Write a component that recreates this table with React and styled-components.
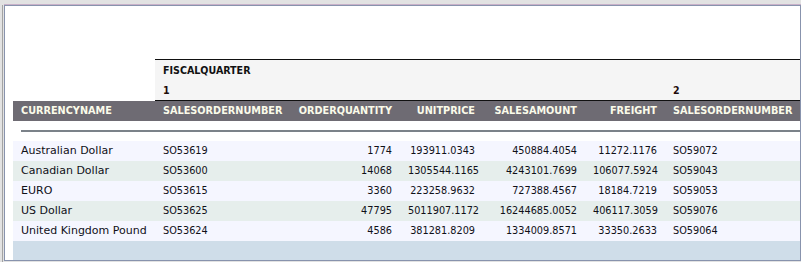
import React from "react";
import styled, { createGlobalStyle } from "styled-components";

const Global = createGlobalStyle`
  html, body { margin: 0; padding: 0; background: #e2e2e2; }
  body { font-family: "DejaVu Sans Condensed", "DejaVu Sans", sans-serif; font-size: 10.6px; }
`;

const COLS = "142px 134px 111px 83px 102px 80px 1fr";

const Shell = styled.div`
  width: 801px;
  height: 262px;
  box-sizing: border-box;
  padding: 5px 0 0 2px;
  background: #e2e2e2;
  overflow: hidden;
`;

const Bezel = styled.div`
  border-left: 1px solid #a3a3a3;
  padding-left: 1px;
  height: 100%;
  box-sizing: border-box;
`;

const Panel = styled.div`
  box-sizing: border-box;
  height: 256px;
  border: 1px solid #8893ad;
  box-shadow: 0 -1px 0 #c9b1c9;
  background: #ffffff;
  overflow: hidden;
  padding-left: 8px;
`;

const TopSpace = styled.div`
  height: 53px;
`;

const FiscalRow = styled.div`
  display: grid;
  grid-template-columns: 142px 1fr;
`;

const FiscalBox = styled.div`
  grid-column: 2;
  background: #f5f5f5;
  border-top: 1px solid #111;
  border-bottom: 1px solid #111;
`;

const QuarterGrid = styled.div`
  display: grid;
  grid-template-columns: 510px 1fr;
`;

const FiscalCell = styled.div`
  height: 20px;
  line-height: 20px;
  padding-left: 8px;
  font-weight: bold;
  color: ${(p) => (p.$dark ? "#1e0c0c" : "#111")};
  white-space: nowrap;
`;

const GridRow = styled.div`
  display: grid;
  grid-template-columns: ${COLS};
  height: 20px;
  background: ${(p) => p.$bg};
`;

const Cell = styled.div`
  line-height: 20px;
  padding: 0 8px;
  white-space: nowrap;
  overflow: hidden;
  text-align: ${(p) => (p.$right ? "right" : "left")};
  color: ${(p) => (p.$head ? "#fbfbea" : "#101018")};
  font-weight: ${(p) => (p.$head ? "bold" : "normal")};
  font-family: ${(p) =>
    p.$wide ? '"DejaVu Sans", sans-serif' : '"DejaVu Sans Condensed", "DejaVu Sans", sans-serif'};
  font-size: ${(p) => (p.$wide ? "11px" : "10.8px")};
`;

const Gap = styled.div`
  height: 9px;
`;

const Rule = styled.div`
  height: 2px;
  margin-left: 8px;
  background: #7b8289;
`;

const Filler = styled.div`
  height: 20px;
  background: #cfdde9;
`;

const headers = [
  ["CURRENCYNAME", false],
  ["SALESORDERNUMBER", false],
  ["ORDERQUANTITY", true],
  ["UNITPRICE", true],
  ["SALESAMOUNT", true],
  ["FREIGHT", true],
  ["SALESORDERNUMBER", false],
];

const rows = [
  ["Australian Dollar", "SO53619", "1774", "193911.0343", "450884.4054", "11272.1176", "SO59072"],
  ["Canadian Dollar", "SO53600", "14068", "1305544.1165", "4243101.7699", "106077.5924", "SO59043"],
  ["EURO", "SO53615", "3360", "223258.9632", "727388.4567", "18184.7219", "SO59053"],
  ["US Dollar", "SO53625", "47795", "5011907.1172", "16244685.0052", "406117.3059", "SO59076"],
  ["United Kingdom Pound", "SO53624", "4586", "381281.8209", "1334009.8571", "33350.2633", "SO59064"],
];

export default function App() {
  return (
    <>
      <Global />
      <Shell>
        <Bezel>
          <Panel>
            <TopSpace />
            <FiscalRow>
              <FiscalBox>
                <FiscalCell>FISCALQUARTER</FiscalCell>
                <QuarterGrid>
                  <FiscalCell $dark>1</FiscalCell>
                  <FiscalCell $dark>2</FiscalCell>
                </QuarterGrid>
              </FiscalBox>
            </FiscalRow>
            <GridRow $bg="#6e6b73">
              {headers.map(([h, r], i) => (
                <Cell key={i} $head $right={r}>
                  {h}
                </Cell>
              ))}
            </GridRow>
            <Gap />
            <Rule />
            <Gap />
            {rows.map((row, ri) => (
              <GridRow key={ri} $bg={ri % 2 === 0 ? "#f5f6ff" : "#e6eeec"}>
                {row.map((v, ci) => (
                  <Cell key={ci} $right={headers[ci][1]} $wide={ci === 0}>
                    {v}
                  </Cell>
                ))}
              </GridRow>
            ))}
            <Filler />
          </Panel>
        </Bezel>
      </Shell>
    </>
  );
}
